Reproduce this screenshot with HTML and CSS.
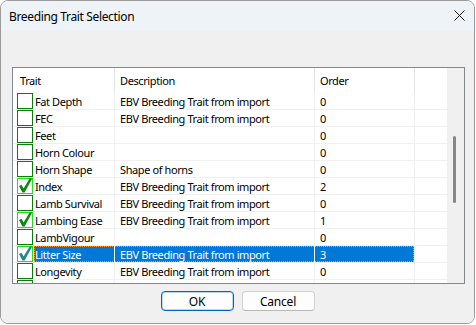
FILE: index.html
```html
<!DOCTYPE html>
<html lang="en">
<head>
  <meta charset="UTF-8">
  <title>Breeding Trait Selection</title>
  <link rel="stylesheet" href="styles.css">
</head>
<body>
  <div class="window">
    <div class="titlebar">
      <span class="title">Breeding Trait Selection</span>
      <svg class="close" width="11" height="11" viewBox="0 0 11 11">
        <path d="M0.5 0.5 L10.5 10.5 M10.5 0.5 L0.5 10.5" stroke="#1a1a1a" stroke-width="1" fill="none"/>
      </svg>
    </div>

    <div class="client">
      <div class="listbox">
        <div class="grid">
          <div class="row head">
            <div class="cell c1">Trait</div>
            <div class="cell c2">Description</div>
            <div class="cell c3">Order</div>
            <div class="cell c4"></div>
          </div>

          <div class="row">
            <div class="cell c1"><span class="check"></span><span class="label">Fat Depth</span></div>
            <div class="cell c2">EBV Breeding Trait from import</div>
            <div class="cell c3">0</div>
            <div class="cell c4"></div>
          </div>
          <div class="row">
            <div class="cell c1"><span class="check"></span><span class="label">FEC</span></div>
            <div class="cell c2">EBV Breeding Trait from import</div>
            <div class="cell c3">0</div>
            <div class="cell c4"></div>
          </div>
          <div class="row">
            <div class="cell c1"><span class="check"></span><span class="label">Feet</span></div>
            <div class="cell c2"></div>
            <div class="cell c3">0</div>
            <div class="cell c4"></div>
          </div>
          <div class="row">
            <div class="cell c1"><span class="check"></span><span class="label">Horn Colour</span></div>
            <div class="cell c2"></div>
            <div class="cell c3">0</div>
            <div class="cell c4"></div>
          </div>
          <div class="row">
            <div class="cell c1"><span class="check"></span><span class="label">Horn Shape</span></div>
            <div class="cell c2">Shape of horns</div>
            <div class="cell c3">0</div>
            <div class="cell c4"></div>
          </div>
          <div class="row">
            <div class="cell c1">
              <span class="check on"><svg viewBox="0 0 16 16"><polygon points="2,8 4.5,6.8 6.6,10.4 12.6,0.6 15.2,0.6 7.6,14.6 5.4,14.6"/></svg></span>
              <span class="label">Index</span>
            </div>
            <div class="cell c2">EBV Breeding Trait from import</div>
            <div class="cell c3">2</div>
            <div class="cell c4"></div>
          </div>
          <div class="row">
            <div class="cell c1"><span class="check"></span><span class="label">Lamb Survival</span></div>
            <div class="cell c2">EBV Breeding Trait from import</div>
            <div class="cell c3">0</div>
            <div class="cell c4"></div>
          </div>
          <div class="row">
            <div class="cell c1">
              <span class="check on"><svg viewBox="0 0 16 16"><polygon points="2,8 4.5,6.8 6.6,10.4 12.6,0.6 15.2,0.6 7.6,14.6 5.4,14.6"/></svg></span>
              <span class="label">Lambing Ease</span>
            </div>
            <div class="cell c2">EBV Breeding Trait from import</div>
            <div class="cell c3">1</div>
            <div class="cell c4"></div>
          </div>
          <div class="row">
            <div class="cell c1"><span class="check"></span><span class="label">LambVigour</span></div>
            <div class="cell c2"></div>
            <div class="cell c3">0</div>
            <div class="cell c4"></div>
          </div>
          <div class="row selected">
            <div class="cell c1">
              <span class="check on"><svg viewBox="0 0 16 16"><polygon points="2,8 4.5,6.8 6.6,10.4 12.6,0.6 15.2,0.6 7.6,14.6 5.4,14.6"/></svg></span>
              <span class="label">Litter Size</span>
            </div>
            <div class="cell c2">EBV Breeding Trait from import</div>
            <div class="cell c3">3</div>
            <div class="cell c4"></div>
          </div>
          <div class="row">
            <div class="cell c1"><span class="check"></span><span class="label">Longevity</span></div>
            <div class="cell c2">EBV Breeding Trait from import</div>
            <div class="cell c3">0</div>
            <div class="cell c4"></div>
          </div>
          <div class="row">
            <div class="cell c1"><span class="check"></span><span class="label"></span></div>
            <div class="cell c2"></div>
            <div class="cell c3"></div>
            <div class="cell c4"></div>
          </div>
        </div>
        <div class="scrollbar"><div class="thumb"></div></div>
      </div>

      <div class="buttons">
        <button class="btn default">OK</button>
        <button class="btn">Cancel</button>
      </div>
    </div>
  </div>
</body>
</html>
```

FILE: styles.css
```css
body {
  margin: 0;
  background: #ffffff;
  font-family: 'Noto Sans', 'Open Sans', sans-serif;
  font-size: 11px;
  letter-spacing: -0.4px;
  color: #000;
}
.window {
  width: 473px;
  height: 322px;
  border: 1px solid #9b9b9b;
  border-radius: 8px;
  overflow: hidden;
  display: flex;
  flex-direction: column;
}
.titlebar {
  height: 30px;
  background: #edf3f7;
  display: flex;
  align-items: center;
  padding: 0 8px 0 8px;
}
.title {
  flex: 1;
  font-size: 12px;
  letter-spacing: -0.35px;
  padding-top: 1px;
}
.close {
  margin-right: 1px;
  margin-top: -1px;
}
.client {
  flex: 1;
  background: #f0f0f0;
  padding: 36px 9px 0 11px;
}
.listbox {
  width: 451px;
  height: 215px;
  border: 1px solid #828790;
  background: #fff;
  display: flex;
  overflow: hidden;
}
.grid {
  width: 434px;
}
.row {
  display: grid;
  grid-template-columns: 102px 200px 100px 32px;
  height: 17px;
}
.cell {
  border-right: 1px solid #f0f0f0;
  border-bottom: 1px solid #f0f0f0;
  padding-left: 5px;
  line-height: 17px;
  white-space: nowrap;
  overflow: hidden;
}
.c4 {
  border-right: none;
}
.row.head {
  height: 25px;
}
.head .cell {
  border-bottom: none;
  border-right-color: #e5e5e5;
  line-height: 25px;
}
.head .c4 {
  border-right: none;
}
.row .c1 {
  display: flex;
  align-items: center;
  padding-left: 4px;
}
.head.row .c1 {
  display: block;
  padding-left: 7px;
}
.check {
  width: 14px;
  height: 14px;
  border: 1px solid #0a7d0a;
  background: #fff;
  flex: none;
}
.check.on {
  border-color: #24dc24;
}
.check svg {
  width: 16px;
  height: 16px;
  margin: -1px 0 0 -1px;
  display: block;
  fill: #0a8a0a;
}
.label {
  flex: 1;
  align-self: stretch;
  margin-left: 1px;
  padding-left: 1px;
}
.selected .label,
.selected .c2,
.selected .c3 {
  background-color: #0078d7;
  color: #fff;
}
.selected .c1,
.selected .c2 {
  border-right-color: #fff;
}
.selected .check svg {
  fill: #1b8c84;
}
.selected .label {
  background-image:
    repeating-linear-gradient(90deg, #f29a3a 0 1px, transparent 1px 2px),
    repeating-linear-gradient(90deg, #f29a3a 0 1px, transparent 1px 2px),
    repeating-linear-gradient(180deg, #f29a3a 0 1px, transparent 1px 2px);
  background-size: 100% 1px, 100% 1px, 1px 100%;
  background-position: top, bottom, left;
  background-repeat: no-repeat;
}
.selected .c2 {
  background-image:
    repeating-linear-gradient(90deg, #f29a3a 0 1px, transparent 1px 2px),
    repeating-linear-gradient(90deg, #f29a3a 0 1px, transparent 1px 2px);
  background-size: 100% 1px, 100% 1px;
  background-position: top, bottom;
  background-repeat: no-repeat;
}
.selected .c3 {
  background-image:
    repeating-linear-gradient(90deg, #f29a3a 0 1px, transparent 1px 2px),
    repeating-linear-gradient(90deg, #f29a3a 0 1px, transparent 1px 2px),
    repeating-linear-gradient(180deg, #f29a3a 0 1px, transparent 1px 2px);
  background-size: 100% 1px, 100% 1px, 1px 100%;
  background-position: top, bottom, right;
  background-repeat: no-repeat;
}
.scrollbar {
  width: 17px;
  background: #f0f0f0;
}
.thumb {
  width: 3px;
  height: 67px;
  margin: 68px 0 0 6px;
  background: #868686;
  border-radius: 2px;
}
.buttons {
  display: flex;
  justify-content: center;
  gap: 8px;
  margin-top: 7px;
  padding-right: 2px;
}
.btn {
  width: 73px;
  height: 20px;
  font-family: inherit;
  font-size: 12px;
  letter-spacing: -0.2px;
  padding: 0;
  background: #fdfdfd;
  border: 1px solid #d0d0d0;
  border-bottom-color: #b8b8b8;
  border-radius: 4px;
  color: #000;
}
.btn.default {
  border-color: #0067c0;
  box-shadow: inset 0 0 0 1px rgba(0, 103, 192, 0.25);
}
```
